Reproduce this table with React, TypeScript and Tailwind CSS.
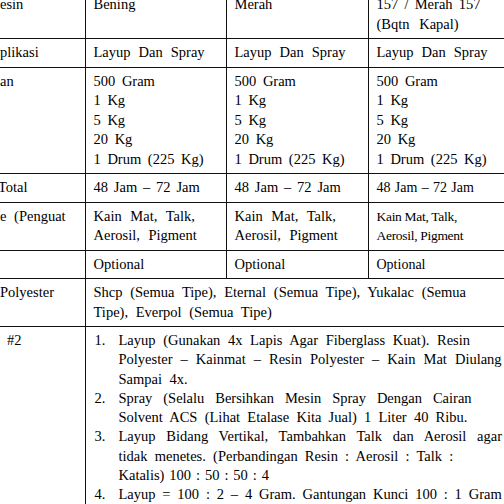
const cell = 'border border-[#111] align-top px-[8px] py-[4px]';
const first = 'border-y border-r border-[#111] align-top pl-0 pr-[4px] py-[4px]';

const packs = ['500 Gram', '1 Kg', '5 Kg', '20 Kg', '1 Drum (225 Kg)'];

// each line of the numbered steps keeps its own spacing, like the justified source
const steps = [
  {
    n: '1.',
    lines: [
      ['Layup (Gunakan 4x Lapis Agar Fiberglass Kuat). Resin', '[word-spacing:4px]'],
      ['Polyester – Kainmat – Resin Polyester – Kain Mat Diulang', '[word-spacing:4.4px]'],
      ['Sampai 4x.', '[word-spacing:4px]'],
    ],
  },
  {
    n: '2.',
    lines: [
      ['Spray (Selalu Bersihkan Mesin Spray Dengan Cairan', '[word-spacing:7.3px]'],
      ['Solvent ACS (Lihat Etalase Kita Jual) 1 Liter 40 Ribu.', '[word-spacing:3.6px]'],
    ],
  },
  {
    n: '3.',
    lines: [
      ['Layup Bidang Vertikal, Tambahkan Talk dan Aerosil agar', '[word-spacing:7.1px]'],
      ['tidak menetes. (Perbandingan Resin : Aerosil : Talk :', '[word-spacing:3.6px]'],
      ['Katalis) 100 : 50 : 50 : 4', '[word-spacing:1.3px]'],
    ],
  },
  {
    n: '4.',
    lines: [['Layup = 100 : 2 – 4 Gram. Gantungan Kunci 100 : 1 Gram', '[word-spacing:3.2px]']],
  },
];

function App() {
  return (
    <div className="h-screen w-full overflow-hidden bg-white">
      <table
        className="-mt-[10px] table-fixed border-collapse text-left text-[14.5px] leading-[19.5px] text-black [font-family:'Liberation_Serif','Times_New_Roman',serif] whitespace-nowrap"
        style={{ width: 518 }}
      >
        <colgroup>
          <col className="w-[85px]" />
          <col className="w-[141px]" />
          <col className="w-[142px]" />
          <col className="w-[150px]" />
        </colgroup>
        <tbody>
          <tr>
            <td className={first}>esin</td>
            <td className={cell}>Bening</td>
            <td className={cell}>Merah</td>
            <td className={cell}>
              <div className="[word-spacing:2.6px]">157 / Merah 157</div>
              <div className="[word-spacing:6px]">(Bqtn Kapal)</div>
            </td>
          </tr>
          <tr>
            <td className={first}>plikasi</td>
            <td className={`${cell} [word-spacing:4.4px]`}>Layup Dan Spray</td>
            <td className={`${cell} [word-spacing:4.4px]`}>Layup Dan Spray</td>
            <td className={`${cell} [word-spacing:4.4px]`}>Layup Dan Spray</td>
          </tr>
          <tr>
            <td className={first}>an</td>
            {[0, 1, 2].map((c) => (
              <td key={c} className={`${cell} [word-spacing:3px]`}>
                {packs.map((p) => (
                  <div key={p}>{p}</div>
                ))}
              </td>
            ))}
          </tr>
          <tr>
            <td className={first}>
              <span className="-ml-[2px] inline-block">Total</span>
            </td>
            <td className={`${cell} [word-spacing:2.2px]`}>48 Jam – 72 Jam</td>
            <td className={`${cell} [word-spacing:2.2px]`}>48 Jam – 72 Jam</td>
            <td className={`${cell} text-[14px] [word-spacing:0.8px]`}>48 Jam – 72 Jam</td>
          </tr>
          <tr>
            <td className={`${first} [word-spacing:4px]`}>e (Penguat</td>
            <td className={`${cell} [word-spacing:5px]`}>
              <div>Kain Mat, Talk,</div>
              <div>Aerosil, Pigment</div>
            </td>
            <td className={`${cell} [word-spacing:5px]`}>
              <div>Kain Mat, Talk,</div>
              <div>Aerosil, Pigment</div>
            </td>
            <td className={`${cell} text-[13.5px] tracking-[-0.3px]`}>
              <div>Kain Mat, Talk,</div>
              <div>Aerosil, Pigment</div>
            </td>
          </tr>
          <tr>
            <td className={first}></td>
            <td className={cell}>Optional</td>
            <td className={cell}>Optional</td>
            <td className={`${cell} text-[14px]`}>Optional</td>
          </tr>
          <tr>
            <td className={first}>Polyester</td>
            <td className={cell} colSpan={3}>
              <div className="[word-spacing:4.1px]">Shcp (Semua Tipe), Eternal (Semua Tipe), Yukalac (Semua</div>
              <div className="[word-spacing:4px]">Tipe), Everpol (Semua Tipe)</div>
            </td>
          </tr>
          <tr>
            <td className={first}>
              <span className="pl-[7px]">#2</span>
            </td>
            <td className={`${cell} leading-[19.3px]`} colSpan={3}>
              {steps.map((s) => (
                <div key={s.n} className="flex">
                  <div className="w-[25px] shrink-0 pl-[1px]">{s.n}</div>
                  <div>
                    {s.lines.map(([text, ws]) => (
                      <div key={text} className={ws}>
                        {text}
                      </div>
                    ))}
                  </div>
                </div>
              ))}
            </td>
          </tr>
        </tbody>
      </table>
    </div>
  );
}

export default App;
